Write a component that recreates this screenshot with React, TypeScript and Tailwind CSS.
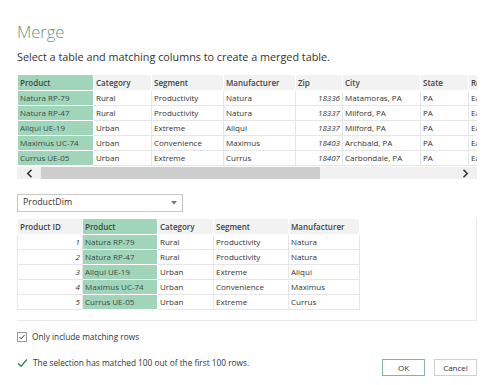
import React from "react";

const font = { fontFamily: '"Open Sans", "Noto Sans", sans-serif' };

const topCols = [
  { h: "Product", w: 76 },
  { h: "Category", w: 58 },
  { h: "Segment", w: 72 },
  { h: "Manufacturer", w: 72 },
  { h: "Zip", w: 47 },
  { h: "City", w: 78 },
  { h: "State", w: 48 },
  { h: "Region", w: 60 },
];

const topRows = [
  ["Natura RP-79", "Rural", "Productivity", "Natura", "18336", "Matamoras, PA", "PA", "East"],
  ["Natura RP-47", "Rural", "Productivity", "Natura", "18337", "Milford, PA", "PA", "East"],
  ["Aliqui UE-19", "Urban", "Extreme", "Aliqui", "18337", "Milford, PA", "PA", "East"],
  ["Maximus UC-74", "Urban", "Convenience", "Maximus", "18403", "Archbald, PA", "PA", "East"],
  ["Currus UE-05", "Urban", "Extreme", "Currus", "18407", "Carbondale, PA", "PA", "East"],
];

const botCols = [
  { h: "Product ID", w: 65 },
  { h: "Product", w: 75 },
  { h: "Category", w: 56 },
  { h: "Segment", w: 75 },
  { h: "Manufacturer", w: 71 },
];

const botRows = [
  ["1", "Natura RP-79", "Rural", "Productivity", "Natura"],
  ["2", "Natura RP-47", "Rural", "Productivity", "Natura"],
  ["3", "Aliqui UE-19", "Urban", "Extreme", "Aliqui"],
  ["4", "Maximus UC-74", "Urban", "Convenience", "Maximus"],
  ["5", "Currus UE-05", "Urban", "Extreme", "Currus"],
];

export default function App() {
  return (
    <div className="w-[489px] h-[385px] bg-white text-[#333] overflow-hidden" style={font}>
      <div className="pl-[17px] pr-[12px] pt-[22px]">
        <div className="text-[16.5px] leading-[20px] font-light text-[#5f9481]">Merge</div>
        <div className="mt-[8px] text-[10.8px] leading-[14px] text-[#333]">
          Select a table and matching columns to create a merged table.
        </div>

        {/* Top table */}
        <div className="mt-[10px] w-[460px] overflow-hidden">
          <table className="table-fixed border-collapse text-[8px] leading-[14px]" style={{ width: topCols.reduce((a, c) => a + c.w, 0) }}>
            <colgroup>
              {topCols.map((c) => (
                <col key={c.h} style={{ width: c.w }} />
              ))}
            </colgroup>
            <thead>
              <tr className="h-[16px]">
                {topCols.map((c, i) => (
                  <th
                    key={c.h}
                    className={`text-left font-semibold px-[2px] border border-white whitespace-nowrap overflow-hidden ${i === 0 ? "bg-[#a0d5b9] text-[#3d4a44]" : "bg-[#f2f2f2] text-[#444]"}`}
                  >
                    {c.h}
                  </th>
                ))}
              </tr>
            </thead>
            <tbody>
              {topRows.map((r, ri) => (
                <tr key={ri} className="h-[15px]">
                  {r.map((v, i) => (
                    <td
                      key={i}
                      className={`px-[2px] whitespace-nowrap overflow-hidden ${i === 0 ? "bg-[#a0d5b9] border border-white text-[#3d4a44]" : "border border-[#e6e6e6]"} ${i === 4 ? "text-right italic" : "text-left"}`}
                    >
                      {v}
                    </td>
                  ))}
                </tr>
              ))}
            </tbody>
          </table>
          {/* scrollbar */}
          <div className="flex h-[12px] bg-[#f0f0f0] items-center mt-[1px]">
            <div className="w-[24px] h-full flex items-center justify-center">
              <svg width="7" height="9" viewBox="0 0 7 9">
                <path d="M5.5 0.8 L1.8 4.5 L5.5 8.2" fill="none" stroke="#333" strokeWidth="1.6" />
              </svg>
            </div>
            <div className="w-[279px] h-full bg-[#cdcdcd]" />
            <div className="flex-1" />
            <div className="w-[24px] h-full flex items-center justify-center">
              <svg width="7" height="9" viewBox="0 0 7 9">
                <path d="M1.5 0.8 L5.2 4.5 L1.5 8.2" fill="none" stroke="#333" strokeWidth="1.6" />
              </svg>
            </div>
          </div>
        </div>

        {/* Dropdown */}
        <div className="mt-[15px] w-[166px] h-[18px] border border-[#c8c8c8] flex items-center justify-between px-[5px] text-[8.8px]">
          <span>ProductDim</span>
          <svg width="6" height="4" viewBox="0 0 6 4">
            <path d="M0 0 L6 0 L3 3.5 Z" fill="#777" />
          </svg>
        </div>

        {/* Bottom table */}
        <div className="mt-[6px] w-[460px] h-[103px] border border-[#e8e8e8] border-l-0 border-t-0">
          <table className="table-fixed border-collapse text-[8px] leading-[14px]" style={{ width: botCols.reduce((a, c) => a + c.w, 0) }}>
            <colgroup>
              {botCols.map((c) => (
                <col key={c.h} style={{ width: c.w }} />
              ))}
            </colgroup>
            <thead>
              <tr className="h-[16px]">
                {botCols.map((c, i) => (
                  <th
                    key={c.h}
                    className={`text-left font-semibold px-[2px] border border-white whitespace-nowrap ${i === 1 ? "bg-[#a0d5b9] text-[#3d4a44]" : "bg-[#f2f2f2] text-[#444]"}`}
                  >
                    {c.h}
                  </th>
                ))}
              </tr>
            </thead>
            <tbody>
              {botRows.map((r, ri) => (
                <tr key={ri} className="h-[15px]">
                  {r.map((v, i) => (
                    <td
                      key={i}
                      className={`px-[2px] whitespace-nowrap ${i === 1 ? "bg-[#a0d5b9] border border-white text-[#3d4a44]" : "border border-[#e6e6e6]"} ${i === 0 ? "text-right italic" : "text-left"}`}
                    >
                      {v}
                    </td>
                  ))}
                </tr>
              ))}
            </tbody>
          </table>
        </div>

        {/* checkbox */}
        <div className="mt-[10px] h-[12px] flex items-center gap-[5px] text-[8.3px] leading-[12px]">
          <div className="w-[10px] h-[10px] border border-[#999] flex items-center justify-center">
            <svg width="8" height="8" viewBox="0 0 8 8">
              <path d="M1.5 4 L3.2 5.8 L6.5 2" fill="none" stroke="#333" strokeWidth="1" />
            </svg>
          </div>
          <span>Only include matching rows</span>
        </div>

        {/* footer */}
        <div className="mt-[14px] flex items-start justify-between">
          <div className="flex items-center gap-[5px] h-[12px] text-[8.3px] leading-[12px]">
            <svg width="11" height="10" viewBox="0 0 11 10">
              <path d="M1 5.2 L4 8.2 L10 1.5" fill="none" stroke="#2e8b57" strokeWidth="1.4" />
            </svg>
            <span>The selection has matched 100 out of the first 100 rows.</span>
          </div>
          <div className="flex gap-[9px] mt-[2px]">
            <button className="w-[43px] h-[17px] border border-[#7fb89c] bg-white text-[8px] text-[#333]">OK</button>
            <button className="w-[43px] h-[17px] border border-[#cfcfcf] bg-white text-[8px] text-[#333]">Cancel</button>
          </div>
        </div>
      </div>
    </div>
  );
}
